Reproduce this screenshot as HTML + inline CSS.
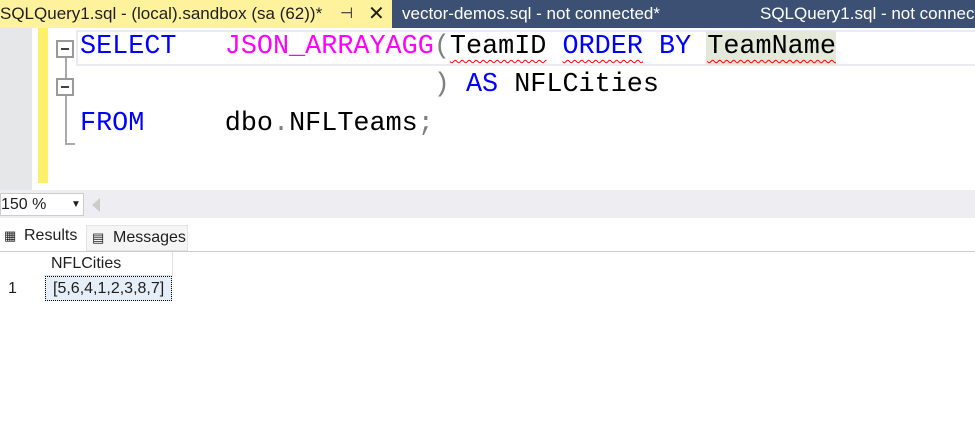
<!DOCTYPE html>
<html><head><style>
body{margin:0;width:975px;height:443px;overflow:hidden;background:#fff;font-family:"Liberation Sans",sans-serif;position:relative}
div{position:absolute;box-sizing:border-box}
.code{font-family:"Liberation Mono",monospace;font-size:26.8px;white-space:pre;line-height:38px}
.k{color:#0000ff}.f{color:#ff00ff}.g{color:#808080}
.sq{text-decoration:underline wavy #f00;text-decoration-thickness:1px;text-underline-offset:6px}
</style></head><body>
<div style="left:0;top:0;width:975px;height:28px;background:#3c5073"></div>
<div style="left:0;top:0;width:392px;height:28px;background:#fff29d;color:#1e1e1e;font-size:17px;line-height:28px;white-space:nowrap">SQLQuery1.sql - (local).sandbox (sa (62))*<span style="position:absolute;left:340px;font-size:15px">⊣</span><span style="position:absolute;left:368px;font-size:20px">✕</span></div>
<div style="left:402px;top:0;height:28px;color:#fff;font-size:17px;line-height:28px;white-space:nowrap">vector-demos.sql - not connected*</div>
<div style="left:760px;top:0;height:28px;color:#fff;font-size:17px;line-height:28px;white-space:nowrap">SQLQuery1.sql - not connected</div>
<div style="left:0;top:28px;width:32px;height:162px;background:#e6e7e8"></div>
<div style="left:38px;top:28px;width:10px;height:155px;background:#fff06b"></div>
<div style="left:76px;top:30px;width:899px;height:36px;border:2px solid #eaeaf2;border-right:none"></div>
<div style="left:56px;top:40px;width:18px;height:18px;border:2px solid #999;background:#fff"><div style="left:3px;top:6px;width:8px;height:2px;background:#444"></div></div>
<div style="left:56px;top:78px;width:18px;height:18px;border:2px solid #999;background:#fff"><div style="left:3px;top:6px;width:8px;height:2px;background:#444"></div></div>
<div style="left:65px;top:58px;width:2px;height:20px;background:#aaa"></div>
<div style="left:65px;top:96px;width:2px;height:49px;background:#aaa"></div>
<div style="left:65px;top:143px;width:10px;height:2px;background:#aaa"></div>
<div style="left:706px;top:31px;width:130px;height:34px;background:#e3e8d8"></div>
<div class="code" style="left:80px;top:28px"><span class="k">SELECT</span>   <span class="f">JSON_ARRAYAGG</span><span class="g">(</span><span class="sq">TeamID</span> <span class="k sq">ORDER</span> <span class="k">BY</span> <span class="sq">TeamName</span></div>
<div class="code" style="left:80px;top:66px">                      <span class="g">)</span> <span class="k">AS</span> NFLCities</div>
<div class="code" style="left:80px;top:105px"><span class="k">FROM</span>     dbo<span class="g">.</span>NFLTeams<span class="g">;</span></div>
<div style="left:0;top:190px;width:975px;height:28px;background:#eeeef2"></div>
<div style="left:0;top:193px;width:84px;height:23px;background:#fff;border:1px solid #ccc;font-size:16px;line-height:21px;color:#1e1e1e">150 %<span style="position:absolute;left:70px;font-size:10px">▼</span></div>
<div style="left:92px;top:198px;width:0;height:0;border-top:7px solid transparent;border-bottom:7px solid transparent;border-right:8px solid #ccc"></div>
<div style="left:0;top:218px;width:975px;height:33px;background:#fff"></div>
<div style="left:0;top:224px;width:84px;height:27px;font-size:16px;line-height:24px;color:#1e1e1e;padding-left:24px">Results<span style="position:absolute;left:4px;top:0;font-size:13px">▦</span></div>
<div style="left:86px;top:225px;width:102px;height:26px;background:#f5f5f5;border:1px solid #e4e4e4;font-size:16px;line-height:24px;color:#1e1e1e;padding-left:26px">Messages<span style="position:absolute;left:5px;top:0;font-size:13px">▤</span></div>
<div style="left:0;top:251px;width:975px;height:1px;background:#ccc"></div>
<div style="left:44px;top:252px;width:129px;height:24px;border-right:1px solid #e0e0e0;border-bottom:1px solid #e0e0e0;font-size:16px;line-height:24px;padding-left:7px;color:#1e1e1e">NFLCities</div>
<div style="left:0;top:276px;width:44px;height:25px;font-size:16px;line-height:25px;padding-left:8px;color:#1e1e1e">1</div>
<div style="left:45px;top:276px;width:127px;height:25px;border:1px dotted #000;background:#e6eef7;font-size:16px;line-height:23px;padding-left:7px;color:#1e1e1e">[5,6,4,1,2,3,8,7]</div>
</body></html>
